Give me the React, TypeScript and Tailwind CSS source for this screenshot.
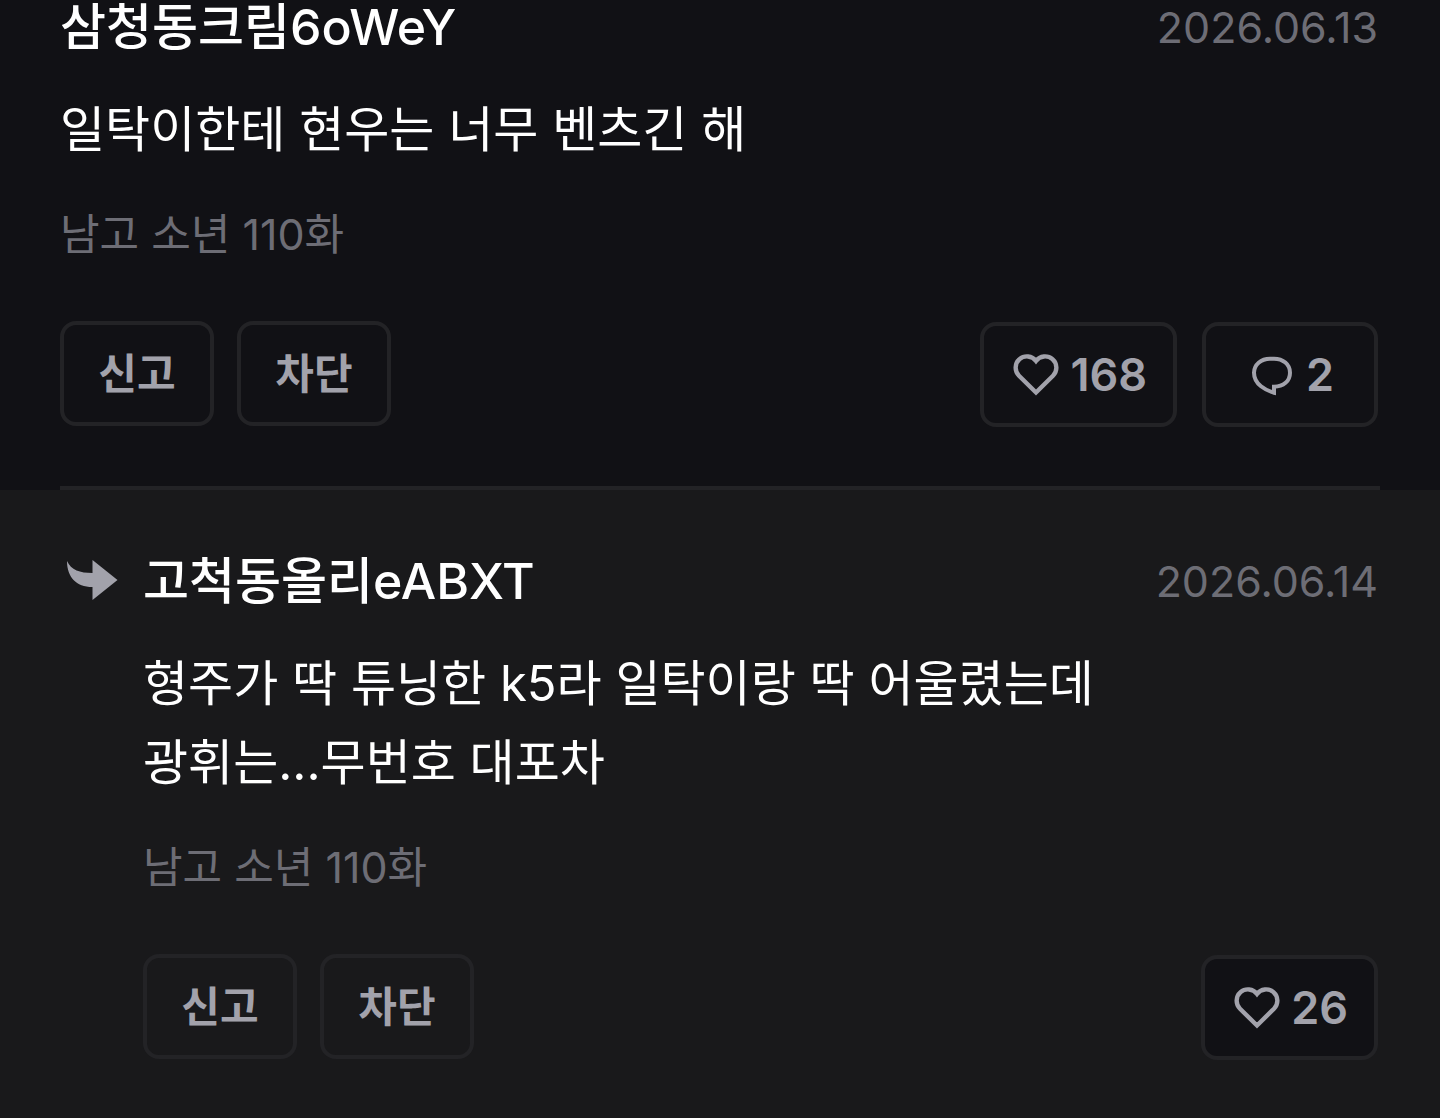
import React from "react";

interface CommentData {
  id: number;
  author: string;
  date: string;
  lines: string[];
  episode: string;
  likes: number;
  replies?: number;
}

const comment: CommentData = {
  id: 1,
  author: "삼청동크림6oWeY",
  date: "2026.06.13",
  lines: ["일탁이한테 현우는 너무 벤츠긴 해"],
  episode: "남고 소년 110화",
  likes: 168,
  replies: 2,
};

const reply: CommentData = {
  id: 2,
  author: "고척동올리eABXT",
  date: "2026.06.14",
  lines: ["형주가 딱 튜닝한 k5라 일탁이랑 딱 어울렸는데", "광휘는...무번호 대포차"],
  episode: "남고 소년 110화",
  likes: 26,
};

const HeartIcon = () => (
  <svg
    viewBox="0 0 48 48"
    className="w-12 h-12"
    fill="none"
    stroke="currentColor"
    strokeWidth="4.4"
    aria-hidden="true"
  >
    <path d="M24 9.9A11.3 11.3 0 1 0 7 24.7L24 41.5L41 24.7A11.3 11.3 0 1 0 24 9.9Z" />
  </svg>
);

const BubbleIcon = () => (
  <svg
    viewBox="0 0 48 48"
    className="w-12 h-12"
    fill="none"
    stroke="currentColor"
    strokeWidth="4"
    aria-hidden="true"
  >
    <path d="M22 7.7h4c9 0 16 5.6 16 14s-6.5 14-16 14v6C18 39.5 6 33.5 6 21.7c0-8 7-14 16-14Z" />
  </svg>
);

const ReplyArrow = () => (
  <svg
    viewBox="0 0 51 40"
    className="w-[51px] h-10"
    fill="currentColor"
    aria-hidden="true"
  >
    <path d="M0 1C4 10 13 13 25.5 13V0L50.5 20L25.5 40V27C9 27 0 17 0 1Z" />
  </svg>
);

const TextButton = ({ children }: { children: React.ReactNode }) => (
  <button
    type="button"
    className="w-[154px] h-[105px] border-4 border-[#232326] rounded-2xl text-[42px] font-bold text-[#a2a2ab]"
  >
    {children}
  </button>
);

const CountButton = ({
  label,
  count,
  icon,
}: {
  label: string;
  count: number;
  icon: React.ReactNode;
}) => (
  <button
    type="button"
    aria-label={`${label} ${count}`}
    className="min-w-44 h-[105px] pl-7 pr-[26px] flex items-center justify-center gap-2.5 border-4 border-[#232326] rounded-2xl bg-[#111115] text-[45px] font-semibold text-[#a2a2ab]"
  >
    {icon}
    <span>{count}</span>
  </button>
);

const CommentBody = ({ data }: { data: CommentData }) => (
  <div className="flex-1 pr-0.5">
    <header className="flex items-center justify-between h-[54px]">
      <h2 className="text-[50px] leading-[56px] font-medium text-white">
        {data.author}
      </h2>
      <time className="text-[43px] leading-[54px] text-[#6d6d75]">
        {data.date}
      </time>
    </header>
    <div className="mt-9 text-[49px] leading-[79px] text-white">
      {data.lines.map((line) => (
        <p key={line}>{line}</p>
      ))}
    </div>
    <p className="mt-[35px] text-[43px] leading-[60px] text-[#6d6d75]">
      {data.episode}
    </p>
    <div className="mt-[57px] flex items-end justify-between">
      <div className="flex gap-[23px] pb-px">
        <TextButton>신고</TextButton>
        <TextButton>차단</TextButton>
      </div>
      <div className="flex gap-[25px]">
        <CountButton label="좋아요" count={data.likes} icon={<HeartIcon />} />
        {data.replies !== undefined ? (
          <CountButton
            label="답글"
            count={data.replies}
            icon={<BubbleIcon />}
          />
        ) : null}
      </div>
    </div>
  </div>
);

const App = () => {
  return (
    <main className="min-h-screen bg-[#19191b] font-['Inter','Noto_Sans_CJK_KR',sans-serif]">
      <section className="px-[60px] bg-[#111115]">
        <article className="flex pb-[59px] border-b-4 border-[#232326]">
          <CommentBody data={comment} />
        </article>
      </section>
      <section className="px-[60px] pt-16 pb-[58px]">
        <article className="flex">
          <div className="w-[83px] h-[52px] pl-[7px] flex items-center text-[#a2a2ab]">
            <ReplyArrow />
          </div>
          <CommentBody data={reply} />
        </article>
      </section>
    </main>
  );
};

export default App;
